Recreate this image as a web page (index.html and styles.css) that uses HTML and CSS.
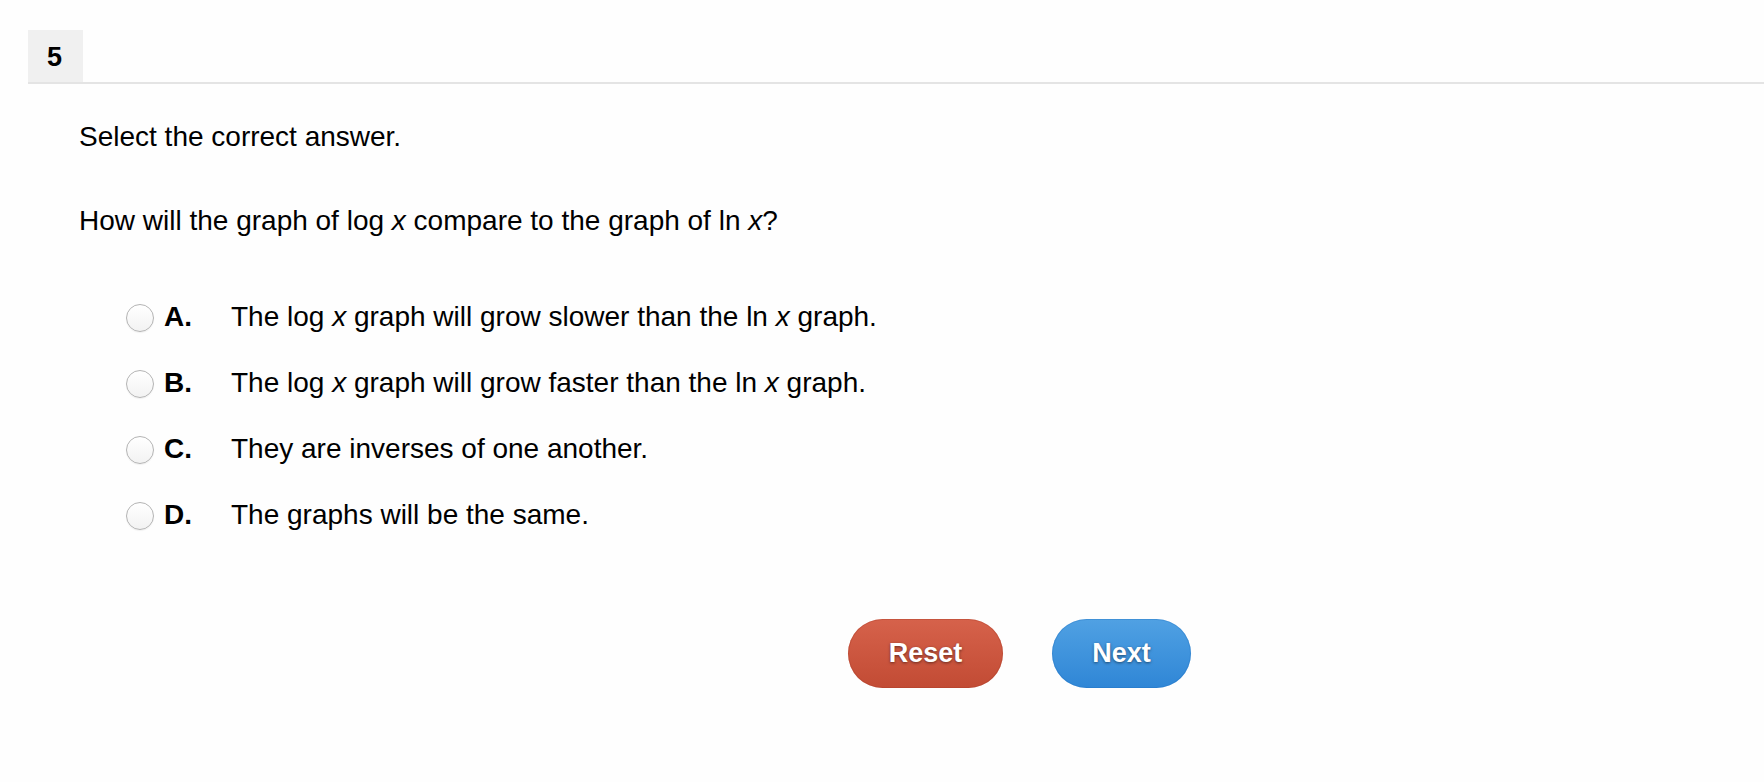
FILE: index.html
```html
<!DOCTYPE html>
<html>
<head>
<meta charset="utf-8">
<link rel="stylesheet" href="styles.css">
</head>
<body>
<div class="page">
  <div class="header">
    <div class="qnum">5</div>
  </div>
  <div class="content">
    <p class="instruction">Select the correct answer.</p>
    <p class="question">How will the graph of log <i>x</i> compare to the graph of ln <i>x</i>?</p>
    <div class="options">
      <div class="option"><span class="radio"></span><span class="letter">A.</span><span class="text">The log <i>x</i> graph will grow slower than the ln <i>x</i> graph.</span></div>
      <div class="option"><span class="radio"></span><span class="letter">B.</span><span class="text">The log <i>x</i> graph will grow faster than the ln <i>x</i> graph.</span></div>
      <div class="option"><span class="radio"></span><span class="letter">C.</span><span class="text">They are inverses of one another.</span></div>
      <div class="option"><span class="radio"></span><span class="letter">D.</span><span class="text">The graphs will be the same.</span></div>
    </div>
  </div>
  <div class="buttons">
    <button class="btn reset">Reset</button>
    <button class="btn next">Next</button>
  </div>
</div>
</body>
</html>
```
FILE: styles.css
```css
html, body {
  margin: 0;
  padding: 0;
  background: #fefefe;
}
body {
  font-family: "Liberation Sans", Arial, Helvetica, sans-serif;
  color: #000;
  overflow: hidden;
  height: 782px;
}
.page {
  height: 782px;
  position: relative;
  overflow: hidden;
}
.page::before {
  content: "";
  position: absolute;
  left: -16px;
  top: -16px;
  width: 80px;
  height: 80px;
  border-top: 2px solid #ededed;
  border-left: 2px solid #ededed;
  border-top-left-radius: 32px;
}
.header {
  margin: 30px 0 0 28px;
  border-bottom: 2px solid #e4e4e4;
  display: flex;
}
.qnum {
  width: 55px;
  height: 52px;
  background: #f0f0f0;
  font-weight: bold;
  font-size: 27px;
  display: flex;
  align-items: center;
  justify-content: center;
  padding-right: 2px;
  padding-top: 2px;
  box-sizing: border-box;
}
.content {
  padding-left: 79px;
}
.instruction {
  margin: 37px 0 0 0;
  font-size: 28px;
  line-height: 32px;
}
.question {
  margin: 52px 0 0 0;
  font-size: 28px;
  line-height: 32px;
}
.options {
  margin: 64px 0 0 47px;
  display: flex;
  flex-direction: column;
  gap: 34px;
}
.option {
  display: flex;
  align-items: center;
  font-size: 28px;
  line-height: 32px;
}
.radio {
  width: 26px;
  height: 26px;
  border-radius: 50%;
  border: 1px solid #b4b4b4;
  background: linear-gradient(#ffffff, #f2f2f2);
  box-shadow: inset 0 1px 1px rgba(255,255,255,0.8), 0 1px 1px rgba(0,0,0,0.05);
  flex: none;
  margin-top: 2px;
}
.letter {
  font-weight: bold;
  margin-left: 10px;
  width: 67px;
}
.buttons {
  margin-top: 88px;
  padding-left: 848px;
  display: flex;
  gap: 49px;
}
.btn {
  height: 69px;
  border-radius: 35px;
  border: none;
  color: #fff;
  font-family: "Liberation Sans", Arial, Helvetica, sans-serif;
  font-weight: bold;
  font-size: 27px;
  text-shadow: 0 1px 3px rgba(0,0,0,0.5);
  padding: 0;
}
.reset {
  width: 155px;
  background: linear-gradient(#d6624b, #c24b34);
  box-shadow: inset 0 0 0 1px rgba(170,60,40,0.35);
}
.next {
  width: 139px;
  background: linear-gradient(#50a1e3, #2f86d6);
  box-shadow: inset 0 0 0 1px rgba(30,110,190,0.3);
}
```
